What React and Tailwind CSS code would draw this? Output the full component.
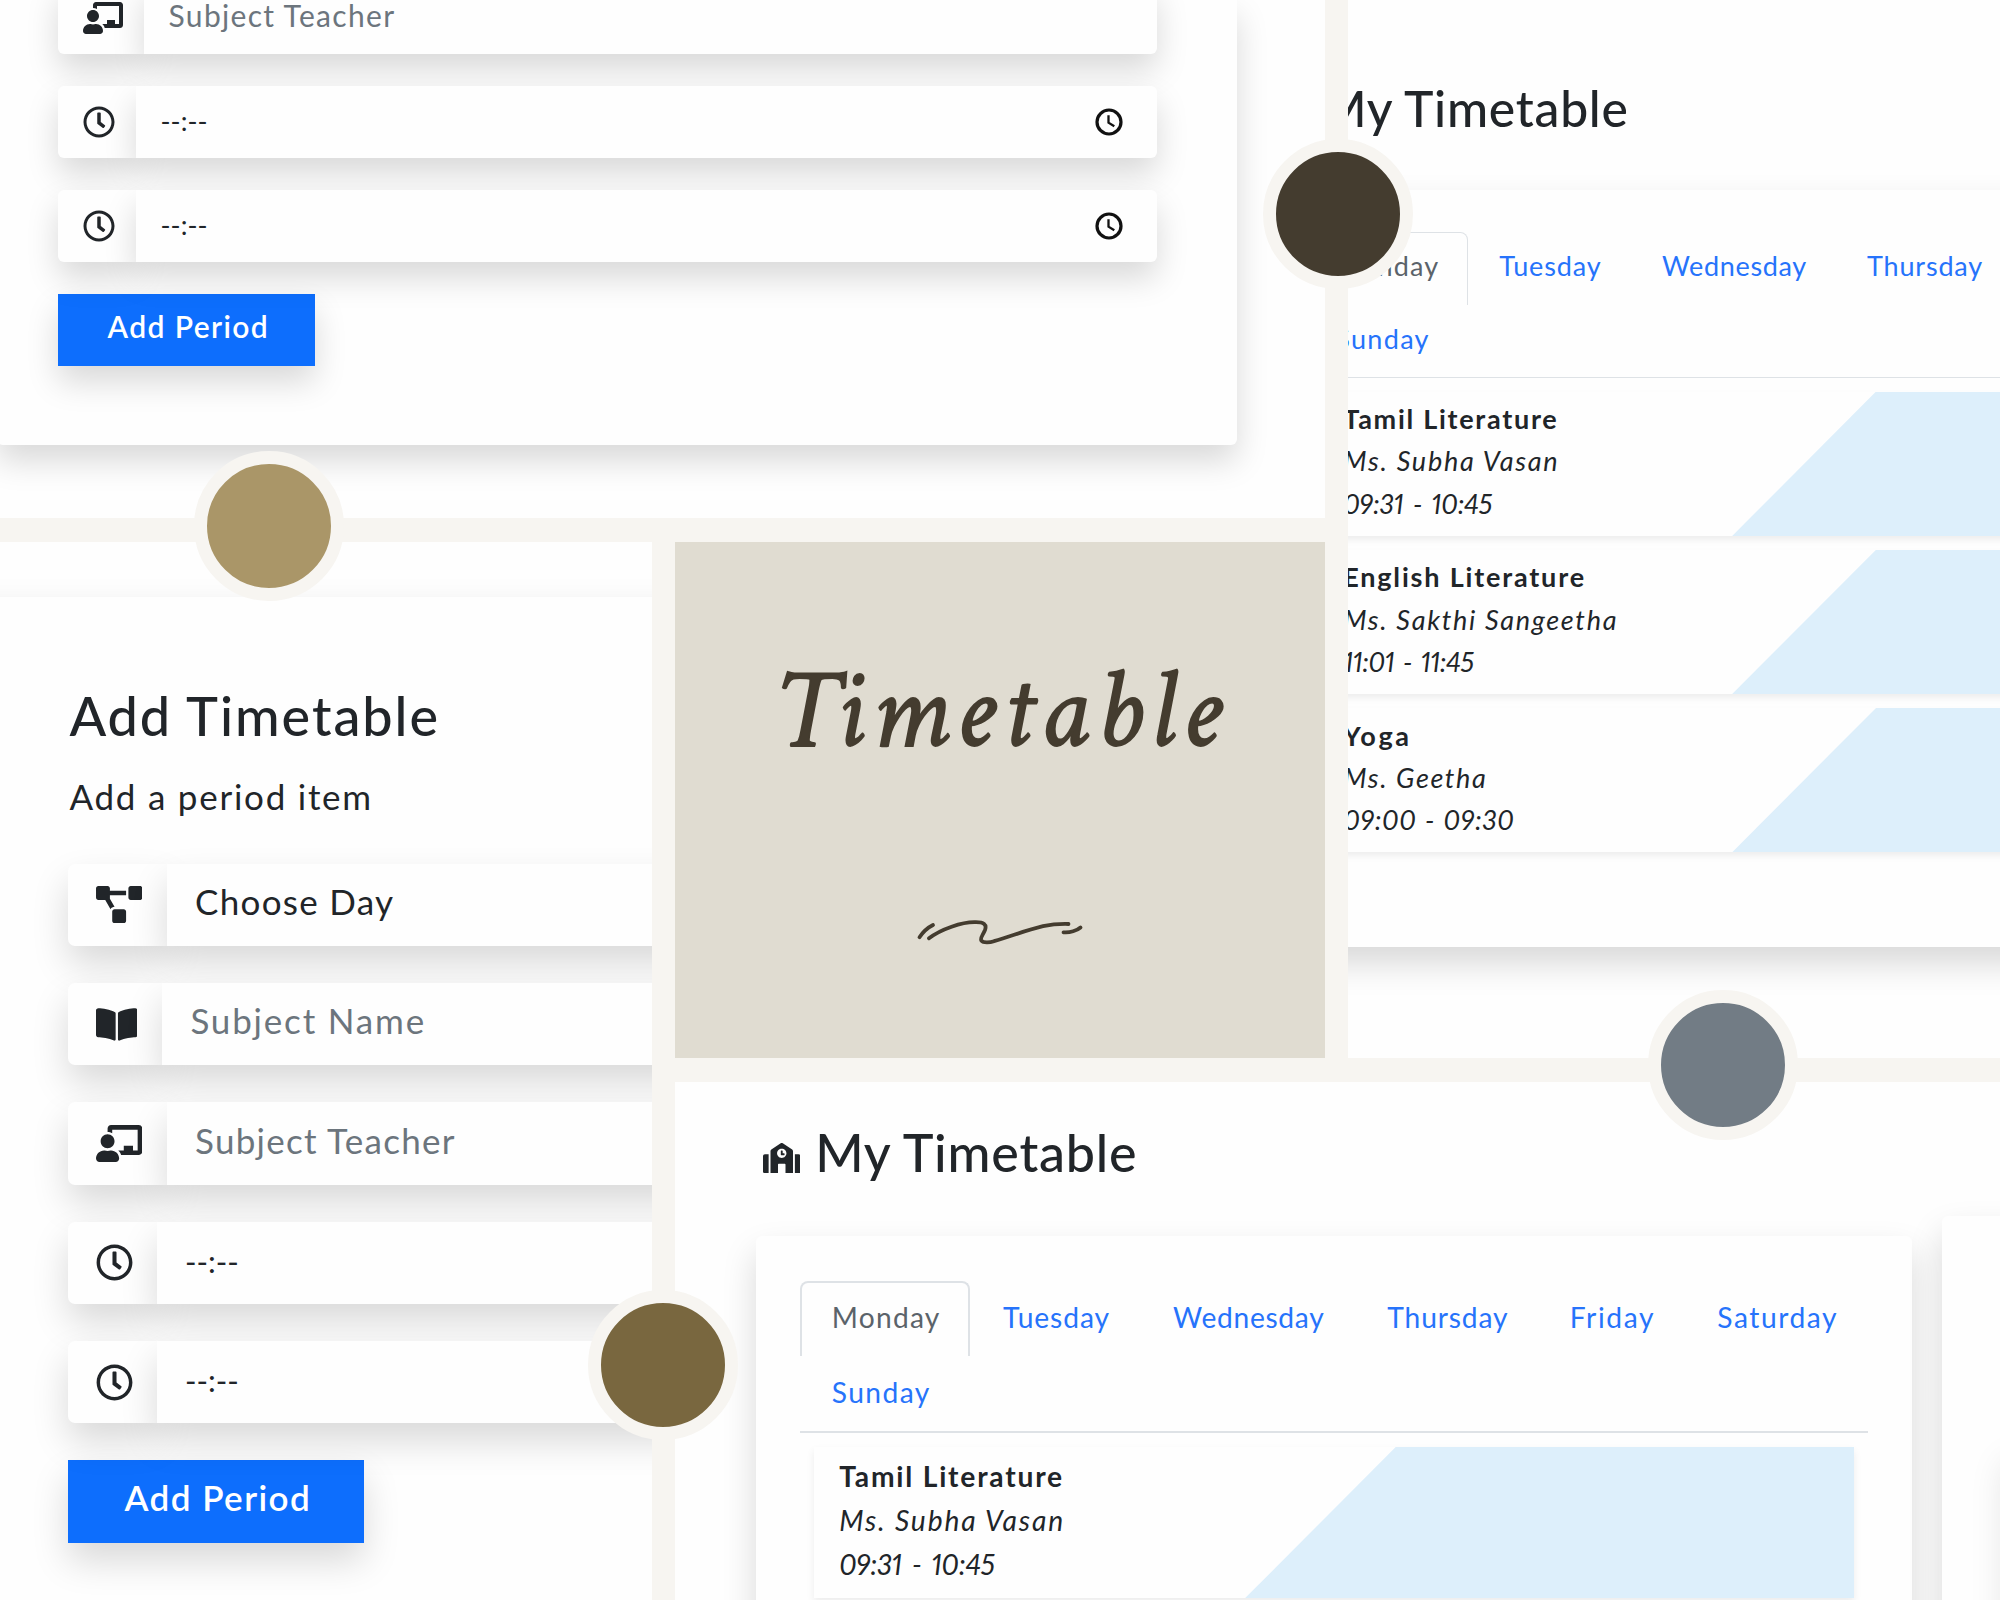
import React from "react";
import {
  FaBookOpen,
  FaChalkboardTeacher,
  FaProjectDiagram,
  FaRegClock,
  FaSchool,
} from "react-icons/fa";

const DAYS = [
  { name: "Monday", cls: "w-[170px] pl-[30px] tracking-[1.22px] rounded-t-[8px] border-[#dee2e6] text-[#5b636a]" },
  { name: "Tuesday", cls: "w-[171px] pl-[31.3px] tracking-[0.9px]" },
  { name: "Wednesday", cls: "w-[214px] pl-[30.3px] tracking-[0.7px]" },
  { name: "Thursday", cls: "w-[183px] pl-[30.5px] tracking-[0.85px]" },
  { name: "Friday", cls: "w-[147px] pl-[30px] tracking-[1.6px]" },
  { name: "Saturday", cls: "w-[170px] pl-[30.5px] tracking-[1.55px]" },
  { name: "Sunday", cls: "w-[170px] pl-[30px] tracking-[1.4px]" },
];

const PERIODS = [
  {
    subject: ["Tamil Literature", "tracking-[1.8px]"],
    teacher: ["Ms. Subha Vasan", "tracking-[1.85px]"],
    time: ["09:31 - 10:45", "tracking-[-0.3px] [word-spacing:3.6px]"],
  },
  {
    subject: ["English Literature", "tracking-[1.9px]"],
    teacher: ["Ms. Sakthi Sangeetha", "tracking-[1.78px]"],
    time: ["11:01 - 11:45", "tracking-[-0.5px] [word-spacing:3px]"],
  },
  {
    subject: ["Yoga", "tracking-[2.8px]"],
    teacher: ["Ms. Geetha", "tracking-[1.7px]"],
    time: ["09:00 - 09:30", "tracking-[0.6px] [word-spacing:1.6px]"],
  },
];

function Period({ subject, teacher, time }) {
  return (
    <div className="ml-[14.4px] mr-[14px] flex h-[151px] bg-[#fefefe] shadow-[0_4px_8px_rgba(0,0,0,0.075)]">
      <div className="w-[431px] pl-[25px] pt-[7px] text-[28.2px] leading-[44.1px] whitespace-nowrap text-[#212529]">
        <p className={`font-bold ${subject[1]}`}>{subject[0]}</p>
        <p className={`italic ${teacher[1]}`}>{teacher[0]}</p>
        <p className={`italic proportional-nums ${time[1]}`}>{time[0]}</p>
      </div>
      <div className="flex-1 bg-[#ddeffb] [clip-path:polygon(150.5px_0,100%_0,100%_100%,0_100%)]" />
    </div>
  );
}

function MyTimetable() {
  return (
    <section className="w-[1500px] pl-[80.8px]">
      <header className="flex h-[154.3px] items-start pl-[7.2px] pt-[36.7px] text-[#212529]">
        <FaSchool className="mt-[24px] h-[30px] w-[37.5px] shrink-0" />
        <h1 className="ml-[14.7px] mt-[3px] text-[52px] leading-[60px] font-medium tracking-[0.78px] whitespace-nowrap">
          My Timetable
        </h1>
      </header>
      <div className="flex items-start gap-[29.6px]">
        <div className="h-[791.3px] w-[1156.6px] shrink-0 rounded-[6px] bg-[#fefefe] px-[44px] pt-[44.4px] shadow-[0_17px_34px_rgba(0,0,0,0.15)]">
          <div className="flex h-[152.4px] flex-wrap content-start border-b-2 border-[#dee2e6] text-[28.2px] leading-[68.4px]">
            {DAYS.map((d) => (
              <div
                key={d.name}
                className={`h-[75.6px] border-2 border-b-0 whitespace-nowrap ${
                  d.name === "Monday" ? "" : "border-transparent text-[#2673fb]"
                } ${d.cls}`}
              >
                {d.name}
              </div>
            ))}
          </div>
          <div className="mt-[14px] flex flex-col gap-[14.2px]">
            {PERIODS.map((p) => (
              <Period key={p.subject[0]} {...p} />
            ))}
          </div>
        </div>
        <div className="-mt-[20.3px] h-[900px] w-[600px] shrink-0 rounded-[6px] bg-[#fefefe] pl-[61px] pt-[228px] shadow-[0_17px_34px_rgba(0,0,0,0.15)]">
          <div className="h-[300px] w-[400px] rounded-[6px] shadow-[0_17px_34px_rgba(0,0,0,0.1)]" />
        </div>
      </div>
    </section>
  );
}

function PickerClock() {
  return (
    <svg viewBox="0 0 28 28" className="size-[28px] text-[#111]" fill="none" stroke="currentColor">
      <circle cx="14" cy="14" r="12" strokeWidth="3.2" />
      <path d="M13.500 7.200V14.700L19.300 18.300" strokeWidth="2.300" />
    </svg>
  );
}

function SmallField({ icon, cell, children, text, picker }) {
  return (
    <div className="relative flex h-[72px] w-[1099px] rounded-[6px]">
      <div className={`flex items-center rounded-l-[6px] bg-[#fefefe] pl-[24.4px] text-[#212529] shadow-[0_16px_32px_rgba(0,0,0,0.15)] ${cell}`}>
        {icon}
      </div>
      <div className="flex flex-1 items-center justify-between rounded-r-[6px] bg-[#fefefe] pl-[24.6px] pr-[34px] shadow-[0_16px_32px_rgba(0,0,0,0.15)]">
        <span className={`whitespace-nowrap ${text}`}>{children}</span>
        {picker && <PickerClock />}
      </div>
    </div>
  );
}

function LargeField({ icon, cell, children, text }) {
  return (
    <div className="relative flex h-[82.5px] w-[900px]">
      <div className={`flex items-center rounded-l-[7px] bg-[#fefefe] pl-[27.5px] text-[#212529] shadow-[0_18px_36px_rgba(0,0,0,0.15)] ${cell}`}>
        {icon}
      </div>
      <div className="flex flex-1 items-center bg-[#fefefe] pl-[28px] shadow-[0_18px_36px_rgba(0,0,0,0.15)]">
        <span className={`whitespace-nowrap ${text}`}>{children}</span>
      </div>
    </div>
  );
}

function Dot({ className }) {
  return <div className={`absolute size-[150px] rounded-full border-[13px] border-[#f7f5f1] ${className}`} />;
}

export default function App() {
  return (
    <main className="relative grid h-[1600px] w-[2000px] grid-cols-[652px_650px_652px] grid-rows-[518px_516px_518px] gap-x-[23px] gap-y-[24px] overflow-hidden bg-[#f7f5f1] font-['Lato',sans-serif]">
      <div className="col-span-2 overflow-hidden bg-[#fefefe]">
        <div className="-ml-[3px] flex h-[445px] w-[1240px] flex-col items-start gap-8 rounded-b-[6px] bg-[#fefefe] pl-[61.4px] shadow-[0_16px_32px_rgba(0,0,0,0.15)]">
          <div className="-mt-[18px]">
            <SmallField
              cell="w-[85.6px]"
              icon={<FaChalkboardTeacher className="h-8 w-10" />}
              text="pb-[5px] text-[30px] tracking-[1.32px] text-[#6c757d]"
            >
              Subject Teacher
            </SmallField>
          </div>
          <SmallField cell="w-[77.6px]" icon={<FaRegClock className="size-8" />} text="pb-[2px] text-[27px] text-[#212529]" picker>
            --:--
          </SmallField>
          <SmallField cell="w-[77.6px]" icon={<FaRegClock className="size-8" />} text="pb-[2px] text-[27px] text-[#212529]" picker>
            --:--
          </SmallField>
          <button className="h-[72px] w-[257px] bg-[#0d6efd] pb-[7px] pl-[3px] text-[30px] font-semibold tracking-[1.4px] text-white shadow-[0_16px_32px_rgba(0,0,0,0.15)]">
            Add Period
          </button>
        </div>
      </div>

      <div className="row-span-2 overflow-hidden bg-[#fefefe]">
        <div className="-ml-[162px] mt-[42px]">
          <div className="[zoom:0.9575]">
            <MyTimetable />
          </div>
        </div>
      </div>

      <div className="row-span-2 overflow-hidden bg-[#fefefe] pt-[55px]">
        <div className="-ml-[40px] h-[1200px] w-[1400px] bg-[#fefefe] pl-[108.400px] pt-[89px] shadow-[0_18px_36px_rgba(0,0,0,0.15)]">
          <h1 className="pl-[1px] text-[54px] leading-[60px] font-medium tracking-[1.95px] text-[#212529]">Add Timetable</h1>
          <p className="mt-[30px] pl-[1px] text-[35px] leading-[40px] tracking-[1.76px] text-[#212529]">Add a period item</p>
          <div className="mt-[47.700px] flex flex-col items-start gap-[36.8px]">
            <LargeField
              cell="w-[98.600px]"
              icon={<FaProjectDiagram className="h-[37px] w-[46.3px]" />}
              text="pb-[8px] text-[35px] tracking-[1.3px] text-[#212529]"
            >
              Choose Day
            </LargeField>
            <LargeField
              cell="w-[94px]"
              icon={<FaBookOpen className="h-[37px] w-[41.6px]" />}
              text="pb-[7px] text-[35px] tracking-[1.82px] text-[#6c757d]"
            >
              Subject Name
            </LargeField>
            <LargeField
              cell="w-[98.600px]"
              icon={<FaChalkboardTeacher className="h-[37px] w-[46.3px]" />}
              text="pb-[7px] text-[35px] tracking-[1.28px] text-[#6c757d]"
            >
              Subject Teacher
            </LargeField>
            <LargeField cell="w-[88.600px]" icon={<FaRegClock className="size-[37px]" />} text="pb-[3px] text-[31px] text-[#212529]">
              --:--
            </LargeField>
            <LargeField cell="w-[88.600px]" icon={<FaRegClock className="size-[37px]" />} text="pb-[3px] text-[31px] text-[#212529]">
              --:--
            </LargeField>
            <button className="h-[82.5px] w-[296px] bg-[#0d6efd] pb-[8px] pl-[3px] text-[35px] font-semibold tracking-[1.45px] text-white shadow-[0_18px_36px_rgba(0,0,0,0.15)]">
              Add Period
            </button>
          </div>
        </div>
      </div>

      <div className="flex flex-col bg-[#e0dcd1] text-[#443c2f]">
        <h2 className="mt-[111px] pl-[99px] font-['Crimson_Text',serif] text-[112px] leading-[120px] tracking-[6.4px] italic [-webkit-text-stroke:1.8px_#443c2f]">
          <span className="tracking-[-4.5px]">T</span>imetable
        </h2>
        <svg
          viewBox="915 917 170 30"
          className="ml-[240px] mt-[144px] h-[30px] w-[170px]"
          fill="none"
          stroke="currentColor"
          strokeWidth="3.8"
          strokeLinecap="round"
          strokeLinejoin="round"
        >
          <path d="M919.5 937.2Q925 929 933 925" />
          <path d="M929 938.3C941 929 962 922 975 922.2C984 922 987 924.500 985 930C983 935 979.500 938.500 981.500 940.800C983.500 943 990 942.500 994 941.200C1012 936 1025 930.500 1043 926.200C1052 924.300 1061 923.800 1068.500 924" />
          <path d="M1063.500 932.300C1070 933 1077 930.500 1080.500 927.500" />
        </svg>
      </div>

      <div className="col-span-2 overflow-hidden bg-[#fefefe]">
        <MyTimetable />
      </div>

      <Dot className="left-[194px] top-[451px] bg-[#aa9668]" />
      <Dot className="left-[1263px] top-[139px] bg-[#443c2f]" />
      <Dot className="left-[1648px] top-[990px] bg-[#727c85]" />
      <Dot className="left-[588px] top-[1290px] bg-[#79673f]" />
    </main>
  );
}
